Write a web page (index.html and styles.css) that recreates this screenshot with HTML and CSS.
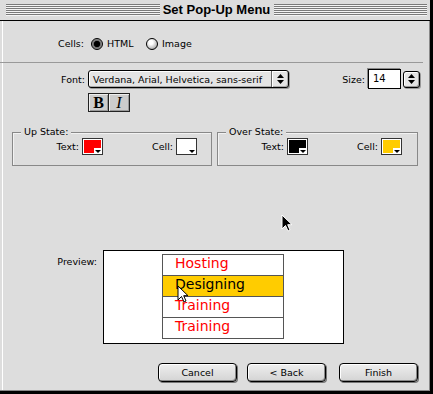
FILE: index.html
```html
<!DOCTYPE html>
<html lang="en">
<head>
    <meta charset="UTF-8">
    <title>Set Pop-Up Menu</title>
    <link rel="stylesheet" href="styles.css">
</head>
<body>
    <div class="window">
        <div class="titlebar">
            <span class="stripes"></span>
            <span class="title">Set Pop-Up Menu</span>
            <span class="stripes"></span>
        </div>
        <div class="content">
            <!-- cells type -->
            <div class="cells-row">
                <span class="label cells-label">Cells:</span>
                <span class="option first"><span class="radio on"></span>HTML</span>
                <span class="option"><span class="radio"></span>Image</span>
            </div>
            <div class="sep"></div>

            <!-- font -->
            <div class="font-row">
                <span class="label font-label">Font:</span>
                <div class="popup">
                    <span class="popup-text">Verdana, Arial, Helvetica, sans-serif</span>
                    <span class="popup-arrow">
                        <svg width="7" height="10" viewBox="0 0 7 10"><path d="M3.5 0L7 4H0Z M0 6H7L3.5 10Z" fill="#000"/></svg>
                    </span>
                </div>
                <span class="label size-label">Size:</span>
                <div class="size-input">14</div>
                <div class="stepper">
                    <svg width="7" height="10" viewBox="0 0 7 10"><path d="M3.5 0L7 4H0Z M0 6H7L3.5 10Z" fill="#000"/></svg>
                </div>
            </div>
            <div class="style-row">
                <span class="style-btn bold">B</span><span class="style-btn italic">I</span>
            </div>

            <!-- states -->
            <div class="groups">
                <div class="group up">
                    <div class="group-title">Up State:</div>
                    <div class="group-grid">
                        <span class="label">Text:</span>
                        <span class="swatch"><span class="fill red"></span></span>
                        <span class="label">Cell:</span>
                        <span class="swatch"><span class="fill white"></span></span>
                    </div>
                </div>
                <div class="group over">
                    <div class="group-title">Over State:</div>
                    <div class="group-grid">
                        <span class="label">Text:</span>
                        <span class="swatch"><span class="fill black"></span></span>
                        <span class="label">Cell:</span>
                        <span class="swatch"><span class="fill yellow"></span></span>
                    </div>
                </div>
            </div>

            <!-- preview -->
            <div class="preview-row">
                <span class="label preview-label">Preview:</span>
                <div class="preview">
                    <ul class="menu">
                        <li>Hosting</li>
                        <li class="over">Designing</li>
                        <li>Training</li>
                        <li>Training</li>
                    </ul>
                </div>
            </div>

            <div class="buttons">
                <button class="btn">Cancel</button>
                <button class="btn back">&lt; Back</button>
                <button class="btn finish">Finish</button>
            </div>
        </div>

        <svg class="cursor cursor-a" width="13" height="19" viewBox="0 0 13 19"><path d="M1 1V15L4.5 11.5L7 17L9 16L6.7 10.7H11Z" fill="#000" stroke="#fff" stroke-width="1"/></svg>
        <svg class="cursor cursor-b" width="13" height="19" viewBox="0 0 13 19"><path d="M1 1V15L4.5 11.5L7 17L9 16L6.7 10.7H11Z" fill="#fff" stroke="#000" stroke-width="1"/></svg>
    </div>
</body>
</html>
```

FILE: styles.css
```css
*{
    margin: 0;
    padding: 0;
    box-sizing: border-box;
}
html, body {
    width: 433px;
    height: 394px;
    overflow: hidden;
    background: #000;
}
body {
    font-family: "DejaVu Sans", Verdana, sans-serif;
    font-size: 9.5px;
    color: #000;
}
.window {
    position: relative;
    width: 430px;
    height: 391px;
    background: #dddddd;
    display: flex;
    flex-direction: column;
}

/* title bar */
.titlebar {
    height: 21px;
    border-bottom: 1px solid #000;
    display: flex;
    align-items: center;
    padding: 0 3px 0 6px;
    background: #dddddd;
}
.stripes {
    flex: 1;
    height: 12px;
    background: repeating-linear-gradient(to bottom, #7a7a7a 0 1px, #f4f4f4 1px 2px);
}
.title {
    width: 114px;
    text-align: center;
    font-family: "Liberation Sans", Arial, sans-serif;
    font-weight: bold;
    font-size: 13px;
    line-height: 14px;
}

.content {
    flex: 1;
    border-right: 1px solid #888;
    border-bottom: 1px solid #888;
    box-shadow: inset 2px 0 0 #dddddd, inset 3px 0 0 #fff;
}
.label {
    text-align: right;
    white-space: nowrap;
}

/* cells */
.cells-row {
    margin-top: 16px;
    height: 13px;
    display: flex;
    align-items: center;
}
.cells-label {
    width: 84px;
}
.option {
    display: flex;
    align-items: center;
    gap: 4px;
}
.option.first {
    margin-left: 7px;
    width: 55px;
}
.radio {
    width: 12px;
    height: 12px;
    border-radius: 50%;
    border: 1px solid #000;
    background: radial-gradient(circle at 40% 35%, #fff 0, #fff 2px, #bbb 6px, #888 8px);
}
.radio.on {
    background: radial-gradient(circle, #000 0, #000 2.8px, #666 3.4px, #999 5px);
}
.sep {
    margin-top: 12px;
    width: 423px;
    height: 1px;
    background: #999;
}

/* font row */
.font-row {
    margin-top: 6px;
    height: 20px;
    display: flex;
    align-items: center;
}
.font-label {
    width: 85px;
}
.popup {
    margin-left: 3px;
    width: 201px;
    height: 18px;
    border: 1px solid #000;
    border-radius: 3px;
    background: #e4e4e4;
    box-shadow: inset 1px 1px 0 #fff, inset -1px -1px 0 #aaa, 1px 1px 0 #999;
    display: flex;
    align-items: center;
}
.popup-text {
    flex: 1;
    padding-left: 4px;
    white-space: nowrap;
    overflow: hidden;
}
.popup-arrow {
    width: 17px;
    height: 16px;
    border-left: 1px solid #666;
    display: flex;
    align-items: center;
    justify-content: center;
    box-shadow: inset 1px 0 0 #fff;
}
.size-label {
    width: 76px;
}
.size-input {
    margin-left: 3px;
    width: 33px;
    height: 20px;
    border: 1px solid #000;
    background: #fff;
    box-shadow: -1px -1px 0 #888;
    padding-left: 4px;
    line-height: 18px;
    font-size: 10px;
}
.stepper {
    margin-left: 2px;
    width: 17px;
    height: 17px;
    border: 1px solid #000;
    border-radius: 3px;
    background: #e4e4e4;
    box-shadow: inset 1px 1px 0 #fff, inset -1px -1px 0 #999, 1px 1px 0 #999;
    display: flex;
    align-items: center;
    justify-content: center;
}

/* bold / italic */
.style-row {
    margin-top: 4px;
    padding-left: 88px;
    height: 19px;
    display: flex;
}
.style-btn {
    width: 21px;
    height: 19px;
    border: 1px solid #222;
    background: #cccccc;
    box-shadow: inset 1px 1px 0 #eee, inset -1px -1px 0 #999;
    font-family: "Liberation Serif", "Times New Roman", serif;
    font-size: 16px;
    line-height: 17px;
    text-align: center;
}
.style-btn.bold {
    font-weight: bold;
}
.style-btn.italic {
    font-style: italic;
    margin-left: -1px;
    width: 22px;
}

/* state groups */
.groups {
    margin-top: 20px;
    padding-left: 12px;
    display: flex;
    gap: 5px;
}
.group {
    width: 200px;
    border: 1px solid #888;
    box-shadow: inset 1px 1px 0 #f2f2f2;
    padding-bottom: 10px;
}
.group.over {
    width: 201px;
}
.group-title {
    margin: -7px 0 0 8px;
    padding: 0 3px;
    width: fit-content;
    line-height: 12px;
    background: #dddddd;
}
.group-grid {
    display: grid;
    grid-template-columns: 66px 21px 67px 21px;
    column-gap: 3px;
    align-items: center;
}
.swatch {
    position: relative;
    display: block;
    width: 21px;
    height: 17px;
    border: 1px solid #333;
    background: #fff;
    padding: 1px;
}
.swatch .fill {
    display: block;
    width: 100%;
    height: 100%;
}
.swatch::after {
    content: "";
    position: absolute;
    right: 0;
    bottom: 0;
    width: 8px;
    height: 6px;
    background: #fff;
    background-image: linear-gradient(45deg, transparent 50%, transparent 50%);
}
.swatch::before {
    content: "";
    position: absolute;
    right: 1px;
    bottom: 1px;
    border-left: 3px solid transparent;
    border-right: 3px solid transparent;
    border-top: 3px solid #000;
    z-index: 1;
}
.fill.red { background: #ff0000; }
.fill.white { background: #fff; }
.fill.black { background: #000; }
.fill.yellow { background: #ffcc00; }

/* preview */
.preview-row {
    margin-top: 84px;
    display: flex;
    align-items: flex-start;
}
.preview-label {
    width: 97px;
    margin-top: 6px;
}
.preview {
    margin-left: 6px;
    width: 241px;
    height: 94px;
    border: 1px solid #000;
    background: #fff;
}
.menu {
    list-style: none;
    margin: 3px 0 0 58px;
    width: 122px;
    border: 1px solid #555;
    font-size: 14px;
    color: #ff0000;
}
.menu li {
    height: 21px;
    border-top: 1px solid #555;
    padding-left: 12px;
    line-height: 16px;
}
.menu li:first-child {
    height: 20px;
    border-top: 0;
}
.menu li.over {
    background: #ffcc00;
    color: #000;
}

/* buttons */
.buttons {
    margin-top: 19px;
    padding-left: 158px;
    display: flex;
}
.btn {
    width: 79px;
    height: 19px;
    border: 1px solid #000;
    border-radius: 4px;
    background: linear-gradient(#eeeeee, #d4d4d4);
    box-shadow: inset 1px 1px 0 #fff, inset -1px -1px 0 #888, 1px 1px 0 #777;
    font-family: "DejaVu Sans", Verdana, sans-serif;
    font-size: 9.5px;
    color: #000;
}
.btn.back {
    margin-left: 10px;
}
.btn.finish {
    margin-left: 13px;
}

/* mouse pointers */
.cursor {
    position: absolute;
}
.cursor-a {
    left: 281px;
    top: 214px;
}
.cursor-b {
    left: 177px;
    top: 285px;
}
```
